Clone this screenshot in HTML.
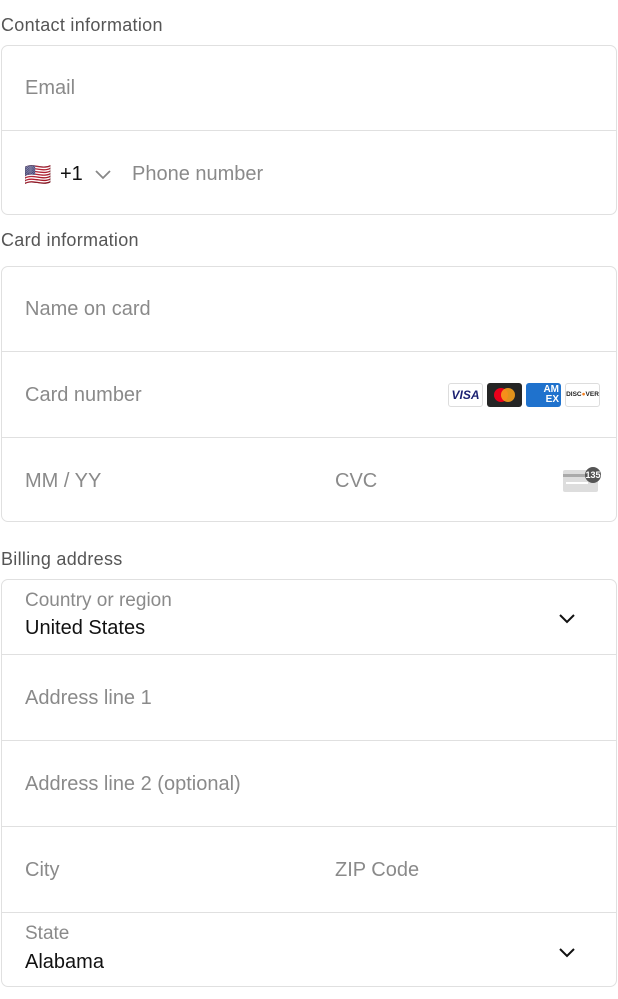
<!DOCTYPE html>
<html><head><meta charset="utf-8"><style>
*{box-sizing:border-box;margin:0;padding:0}
body{width:618px;height:999px;background:#fff;font-family:"Liberation Sans",Roboto,sans-serif;position:relative;overflow:hidden}
.lbl{position:absolute;left:1px;font-size:18px;color:#555;letter-spacing:0.3px}
.box{position:absolute;left:1px;width:616px;border:1.5px solid #e0e0e0;border-radius:7px}
.row{position:absolute;left:0;right:0;border-top:1.5px solid #e0e0e0}
.ph{position:absolute;font-size:20px;color:#8a8a8a}
.val{position:absolute;font-size:20px;color:#111}
.chev{position:absolute}
.card{position:absolute;top:383px;width:35px;height:24px;border-radius:3px}
</style></head><body>
<div class="lbl" style="top:15px">Contact information</div>
<div class="box" style="top:45px;height:170px">
  <div class="ph" style="left:23px;top:31px">Email</div>
  <div class="row" style="top:84px"></div>
  <div style="position:absolute;left:22px;top:116px;font-size:22px">🇺🇸</div>
  <div class="val" style="left:58px;top:117px">+1</div>
  <svg class="chev" style="left:92px;top:122px" width="18" height="12" viewBox="0 0 18 12"><path d="M2 3l7 7 7-7" fill="none" stroke="#888" stroke-width="1.8"/></svg>
  <div class="ph" style="left:130px;top:117px">Phone number</div>
</div>
<div class="lbl" style="top:230px">Card information</div>
<div class="box" style="top:266px;height:256px">
  <div class="ph" style="left:23px;top:31px">Name on card</div>
  <div class="row" style="top:84px"></div>
  <div class="ph" style="left:23px;top:117px">Card number</div>
  <div class="row" style="top:170px"></div>
  <div class="ph" style="left:23px;top:203px">MM / YY</div>
  <div class="ph" style="left:333px;top:203px">CVC</div>
</div>
<div class="card" style="left:448px;border:1px solid #ddd;background:#fff;font:italic bold 12px 'Liberation Sans';color:#1a1f71;text-align:center;line-height:22px">VISA</div>
<div class="card" style="left:487px;background:#252525"><div style="position:absolute;left:7px;top:5px;width:14px;height:14px;border-radius:50%;background:#eb001b"></div><div style="position:absolute;left:14px;top:5px;width:14px;height:14px;border-radius:50%;background:#f79e1b;opacity:.9"></div></div>
<div class="card" style="left:526px;background:#1f72cd;color:#fff;font:bold 10px 'Liberation Sans';line-height:10px;text-align:right;padding:2px 2px 0 0">AM<br>EX</div>
<div class="card" style="left:565px;border:1px solid #ddd;background:#fff;font:bold 6.5px 'Liberation Sans';color:#222;line-height:22px;text-align:center">DISC<span style="color:#f48120">●</span>VER</div>
<svg style="position:absolute;left:562px;top:466px" width="40" height="28" viewBox="0 0 40 28"><rect x="1" y="4" width="35" height="22" rx="2" fill="#ddd"/><rect x="1" y="8" width="35" height="3" fill="#aaa"/><rect x="4" y="16" width="22" height="2" fill="#fff"/><circle cx="31" cy="9" r="8" fill="#555"/><text x="31" y="12" font-size="9" fill="#fff" text-anchor="middle" font-family="Liberation Sans" font-weight="bold">135</text></svg>
<div class="lbl" style="top:549px">Billing address</div>
<div class="box" style="top:579px;height:408px">
  <div class="ph" style="left:23px;top:10px;font-size:19px">Country or region</div>
  <div class="val" style="left:23px;top:37px">United States</div>
  <svg class="chev" style="left:556px;top:32px" width="18" height="12" viewBox="0 0 18 12"><path d="M2 3l7 7 7-7" fill="none" stroke="#111" stroke-width="2"/></svg>
  <div class="row" style="top:74px"></div>
  <div class="ph" style="left:23px;top:107px">Address line 1</div>
  <div class="row" style="top:160px"></div>
  <div class="ph" style="left:23px;top:193px">Address line 2 (optional)</div>
  <div class="row" style="top:246px"></div>
  <div class="ph" style="left:23px;top:279px">City</div>
  <div class="ph" style="left:333px;top:279px">ZIP Code</div>
  <div class="row" style="top:332px"></div>
  <div class="ph" style="left:23px;top:343px;font-size:19px">State</div>
  <div class="val" style="left:23px;top:371px">Alabama</div>
  <svg class="chev" style="left:556px;top:366px" width="18" height="12" viewBox="0 0 18 12"><path d="M2 3l7 7 7-7" fill="none" stroke="#111" stroke-width="2"/></svg>
</div>
</body></html>
